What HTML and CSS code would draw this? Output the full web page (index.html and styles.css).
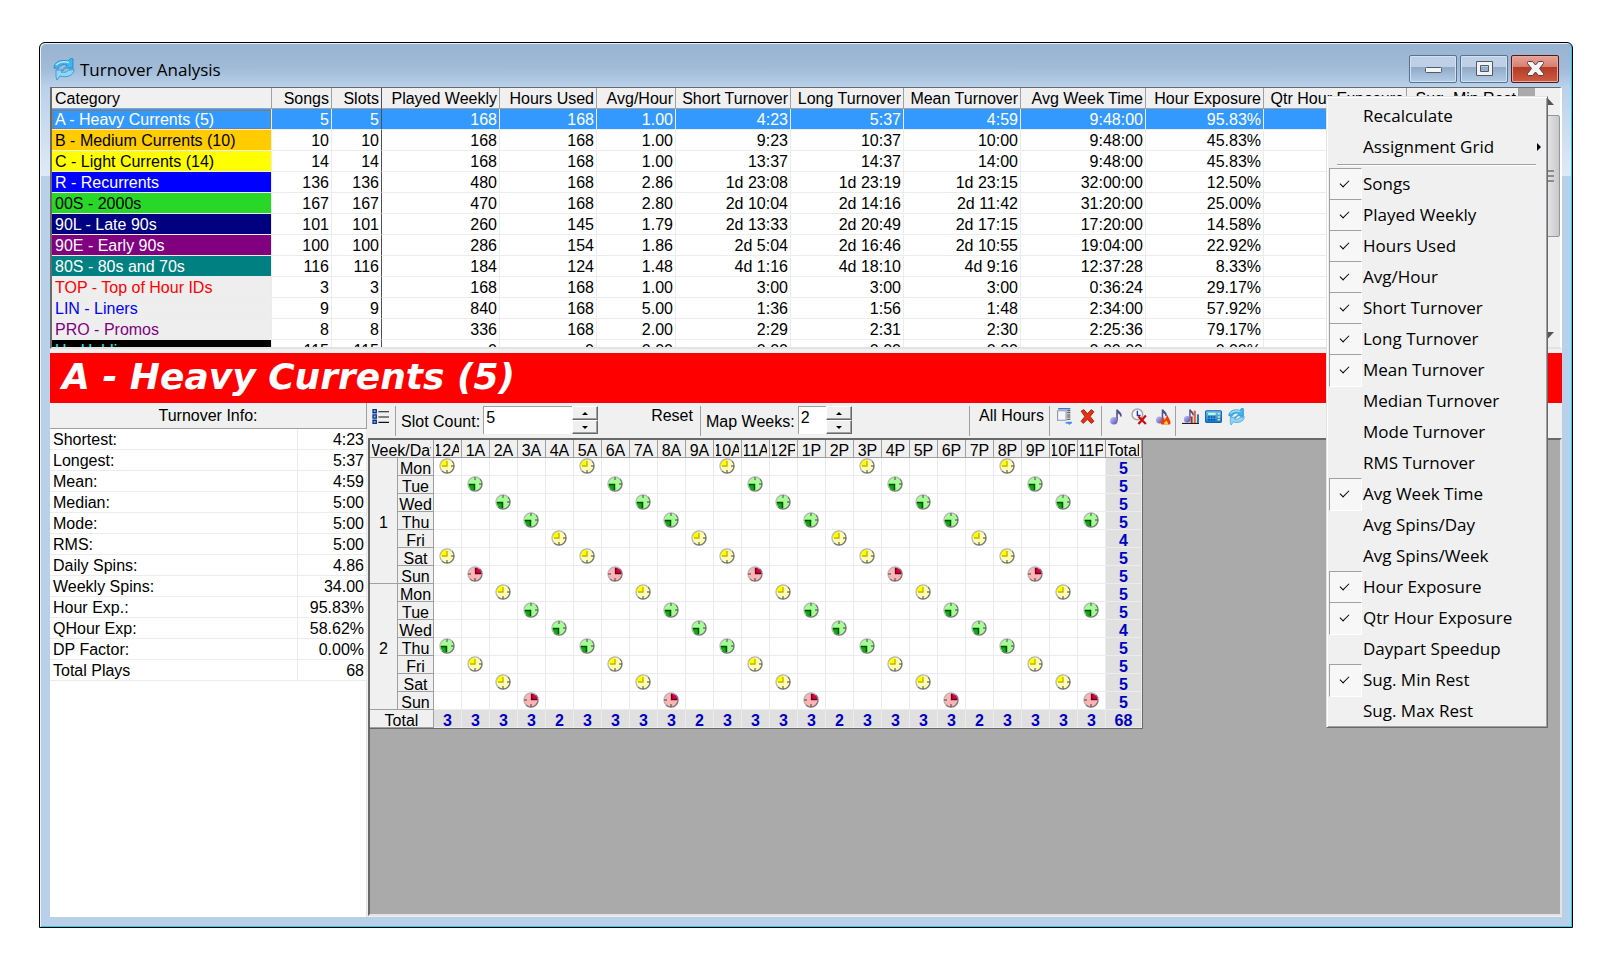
FILE: index.html
```html
<!DOCTYPE html>
<html lang="en">
<head>
<meta charset="utf-8">
<title>Turnover Analysis</title>
<link rel="stylesheet" href="styles.css">
</head>
<body>
<svg class="sprite" aria-hidden="true">
  <defs>
    <linearGradient id="orb" x1="0" y1="0" x2="1" y2="1"><stop offset="0" stop-color="#c9c9fa"/><stop offset="1" stop-color="#4b4bb4"/></linearGradient>
    <linearGradient id="sky" x1="0" y1="0" x2="0" y2="1"><stop offset="0" stop-color="#6cc9f7"/><stop offset="1" stop-color="#1579cf"/></linearGradient>
  </defs>
  <symbol id="clock-yellow" viewBox="0 0 16 16">
    <circle cx="8" cy="8" r="7" fill="#ffffb4"/>
    <path d="M8 8V1A7 7 0 0 0 1 8Z" fill="#ffff00"/><path d="M3 8h5V3" fill="none" stroke="#c8b400" stroke-width="1.4"/>
    <path d="M13 3A7 7 0 0 1 3 13" fill="none" stroke="#777" stroke-width="1.3"/><path d="M3 13A7 7 0 1 1 13 3" fill="none" stroke="#b4b4b4" stroke-width="1.2"/>
    <path d="M8 15v-3M15 8h-3" stroke="#444" stroke-width="1"/>
  </symbol>
  <symbol id="clock-green" viewBox="0 0 16 16">
    <circle cx="8" cy="8" r="7" fill="#a6ff96"/>
    <path d="M8 8H1a7 7 0 0 0 7 7Z" fill="#00b400"/><path d="M2 8.600h5.500V14" fill="none" stroke="#004600" stroke-width="1.500"/>
    <path d="M13 3A7 7 0 0 1 3 13" fill="none" stroke="#777" stroke-width="1.3"/><path d="M3 13A7 7 0 1 1 13 3" fill="none" stroke="#b4b4b4" stroke-width="1.2"/>
    <path d="M8 1v3M15 8h-3" stroke="#444" stroke-width="1"/>
  </symbol>
  <symbol id="clock-red" viewBox="0 0 16 16">
    <circle cx="8" cy="8" r="7" fill="#ffb4b4"/>
    <path d="M8 8V1a7 7 0 0 1 7 7Z" fill="#dc0046"/><path d="M8.600 2v5.500H14" fill="none" stroke="#64001e" stroke-width="1.500"/>
    <path d="M13 3A7 7 0 0 1 3 13" fill="none" stroke="#777" stroke-width="1.3"/><path d="M3 13A7 7 0 1 1 13 3" fill="none" stroke="#b4b4b4" stroke-width="1.2"/>
    <path d="M8 15v-3M1 8h3" stroke="#444" stroke-width="1"/>
  </symbol>
  <symbol id="refresh" viewBox="0 0 22 22">
    <path d="M1 10C1 4 8 1 15 3L18 0l2 1v9h-8l2-3C10 6 7 7 5 11Z" fill="#3fb4f2" stroke="#1e86c8" stroke-width=".8"/>
    <path d="M3 7C6 4 11 3 16 4.500" fill="none" stroke="#b6e6ff" stroke-width="1.500"/>
    <path d="M21 11c0 7-8 9-14 7l-3 4-1-3v-7h8l-3 2c4 1 7 0 9-4Z" fill="#8fd6fa" stroke="#2c8fcb" stroke-width=".8"/>
    <path d="M8 13l6-4M3 10l4-2M16 12l4-1" stroke="#4fa8d8" stroke-width="2"/>
  </symbol>
  <symbol id="note" viewBox="0 0 16 16">
    <path d="M8.500 12V1.500C9 4 13 4 12 8" fill="none" stroke="#50508c" stroke-width="1.500"/>
    <path d="M9 2c1 2 4 3 3 6-.5-2-2-2.500-3-3Z" fill="#50508c"/>
    <circle cx="5.500" cy="12" r="3.500" fill="url(#orb)"/>
  </symbol>
</svg>

<main class="window">
  <header class="titlebar">
    <svg class="app-icon"><use href="#refresh"/></svg>
    <h1 class="title">Turnover Analysis</h1>
    <div class="window-buttons">
      <button class="win-btn" aria-label="Minimize"><svg viewBox="0 0 46 26"><rect x="15.500" y="11.500" width="16" height="5" rx="1" fill="#f4f4f4" stroke="#50586a"/></svg></button>
      <button class="win-btn" aria-label="Maximize"><svg viewBox="0 0 46 26"><path d="M15.500 5.500h16v14h-16ZM19.500 9.500v6h8v-6Z" fill="#f2f2f2" fill-rule="evenodd" stroke="#50586a"/></svg></button>
      <button class="win-btn win-close" aria-label="Close"><svg viewBox="0 0 46 26"><path d="M15.500 6.500q0-1 1-1h4l3 3.500 3-3.500h4q1 0 1 1v1l-4 5 4 5v1q0 1-1 1h-4l-3-3.500-3 3.500h-4q-1 0-1-1v-1l4-5-4-5Z" fill="#f4f4f4" stroke="#57383c"/></svg></button>
    </div>
  </header>

  <div class="client">
    <section class="category-pane">
      <div class="category-scroll">
        <table class="categories">
          <colgroup><col class="w-cat"><col class="w-songs"><col class="w-slots"><col class="w-played"><col class="w-hours"><col class="w-avg"><col class="w-short"><col class="w-long"><col class="w-mean"><col class="w-week"><col class="w-hexp"><col class="w-qexp"><col class="w-rest"></colgroup>
          <thead><tr><th>Category</th><th>Songs</th><th>Slots</th><th>Played Weekly</th><th>Hours Used</th><th>Avg/Hour</th><th>Short Turnover</th><th>Long Turnover</th><th>Mean Turnover</th><th>Avg Week Time</th><th>Hour Exposure</th><th>Qtr Hour Exposure</th><th>Sug. Min Rest</th></tr></thead>
          <tbody>
            <tr class="selected"><td>A - Heavy Currents (5)</td><td>5</td><td>5</td><td>168</td><td>168</td><td>1.00</td><td>4:23</td><td>5:37</td><td>4:59</td><td>9:48:00</td><td>95.83%</td><td></td><td></td></tr>
            <tr><td class="c-orange">B - Medium Currents (10)</td><td>10</td><td>10</td><td>168</td><td>168</td><td>1.00</td><td>9:23</td><td>10:37</td><td>10:00</td><td>9:48:00</td><td>45.83%</td><td></td><td></td></tr>
            <tr><td class="c-yellow">C - Light Currents (14)</td><td>14</td><td>14</td><td>168</td><td>168</td><td>1.00</td><td>13:37</td><td>14:37</td><td>14:00</td><td>9:48:00</td><td>45.83%</td><td></td><td></td></tr>
            <tr><td class="c-blue">R - Recurrents</td><td>136</td><td>136</td><td>480</td><td>168</td><td>2.86</td><td>1d 23:08</td><td>1d 23:19</td><td>1d 23:15</td><td>32:00:00</td><td>12.50%</td><td></td><td></td></tr>
            <tr><td class="c-green">00S - 2000s</td><td>167</td><td>167</td><td>470</td><td>168</td><td>2.80</td><td>2d 10:04</td><td>2d 14:16</td><td>2d 11:42</td><td>31:20:00</td><td>25.00%</td><td></td><td></td></tr>
            <tr><td class="c-navy">90L - Late 90s</td><td>101</td><td>101</td><td>260</td><td>145</td><td>1.79</td><td>2d 13:33</td><td>2d 20:49</td><td>2d 17:15</td><td>17:20:00</td><td>14.58%</td><td></td><td></td></tr>
            <tr><td class="c-purple">90E - Early 90s</td><td>100</td><td>100</td><td>286</td><td>154</td><td>1.86</td><td>2d 5:04</td><td>2d 16:46</td><td>2d 10:55</td><td>19:04:00</td><td>22.92%</td><td></td><td></td></tr>
            <tr><td class="c-teal">80S - 80s and 70s</td><td>116</td><td>116</td><td>184</td><td>124</td><td>1.48</td><td>4d 1:16</td><td>4d 18:10</td><td>4d 9:16</td><td>12:37:28</td><td>8.33%</td><td></td><td></td></tr>
            <tr><td class="c-plain t-red">TOP - Top of Hour IDs</td><td>3</td><td>3</td><td>168</td><td>168</td><td>1.00</td><td>3:00</td><td>3:00</td><td>3:00</td><td>0:36:24</td><td>29.17%</td><td></td><td></td></tr>
            <tr><td class="c-plain t-blue">LIN - Liners</td><td>9</td><td>9</td><td>840</td><td>168</td><td>5.00</td><td>1:36</td><td>1:56</td><td>1:48</td><td>2:34:00</td><td>57.92%</td><td></td><td></td></tr>
            <tr><td class="c-plain t-purple">PRO - Promos</td><td>8</td><td>8</td><td>336</td><td>168</td><td>2.00</td><td>2:29</td><td>2:31</td><td>2:30</td><td>2:25:36</td><td>79.17%</td><td></td><td></td></tr>
            <tr><td class="c-black">H - Holding</td><td>115</td><td>115</td><td>0</td><td>0</td><td>0.00</td><td>0:00</td><td>0:00</td><td>0:00</td><td>0:00:00</td><td>0.00%</td><td></td><td></td></tr>
          </tbody>
        </table>
      </div>
      <div class="scrollbar" aria-hidden="true">
        <svg class="arrow" viewBox="0 0 13 7"><path d="M0 7 6.500 0 13 7Z" fill="#555"/></svg>
        <div class="thumb"><i></i><i></i><i></i></div>
        <svg class="arrow" viewBox="0 0 13 7"><path d="M0 0h13L6.500 7Z" fill="#555"/></svg>
      </div>
    </section>

    <h2 class="banner">A - Heavy Currents (5)</h2>

    <div class="lower">
      <aside class="info-pane">
        <table class="info">
          <colgroup><col class="i-name"><col class="i-value"></colgroup>
          <thead><tr><th colspan="2">Turnover Info:</th></tr></thead>
          <tbody>
            <tr><td>Shortest:</td><td>4:23</td></tr>
            <tr><td>Longest:</td><td>5:37</td></tr>
            <tr><td>Mean:</td><td>4:59</td></tr>
            <tr><td>Median:</td><td>5:00</td></tr>
            <tr><td>Mode:</td><td>5:00</td></tr>
            <tr><td>RMS:</td><td>5:00</td></tr>
            <tr><td>Daily Spins:</td><td>4.86</td></tr>
            <tr><td>Weekly Spins:</td><td>34.00</td></tr>
            <tr><td>Hour Exp.:</td><td>95.83%</td></tr>
            <tr><td>QHour Exp:</td><td>58.62%</td></tr>
            <tr><td>DP Factor:</td><td>0.00%</td></tr>
            <tr><td>Total Plays</td><td>68</td></tr>
          </tbody>
        </table>
      </aside>

      <section class="map-pane">
        <div class="toolbar">
          <div class="group g-list">
            <button class="tool" aria-label="List"><svg viewBox="0 0 16 16"><path d="M6 3.500h10M6 8.500h10M6 13.500h10" stroke="#111" stroke-width="1"/><path d="M1 1.500h3v3H1ZM1 6.500h3v3H1ZM1 11.500h3v3H1Z" fill="#7fd0a0" stroke="#0a2ca0" stroke-width="1.300"/></svg></button>
          </div>
          <div class="group g-slots">
            <label for="slots">Slot Count:</label>
            <input class="num num-wide" id="slots" type="text" value="5">
            <span class="spin"><button aria-label="More slots"><svg viewBox="0 0 6 3"><path d="M0 3 3 0l3 3Z"/></svg></button><button aria-label="Fewer slots"><svg viewBox="0 0 6 3"><path d="M0 0h6L3 3Z"/></svg></button></span>
            <button class="text-btn reset">Reset</button>
          </div>
          <div class="group g-weeks">
            <label for="weeks">Map Weeks:</label>
            <input class="num" id="weeks" type="text" value="2">
            <span class="spin"><button aria-label="More weeks"><svg viewBox="0 0 6 3"><path d="M0 3 3 0l3 3Z"/></svg></button><button aria-label="Fewer weeks"><svg viewBox="0 0 6 3"><path d="M0 0h6L3 3Z"/></svg></button></span>
          </div>
          <div class="group g-hours"><button class="text-btn">All Hours</button></div>
          <div class="group g-icons">
            <button class="tool" aria-label="Fit"><svg viewBox="0 0 16 16"><path d="M1.500 2.500h8v9h-8Z" fill="#f4f6fc" stroke="#8a94b4"/><path d="M2 .700h11.500M9 14h6" fill="none" stroke="#3c78c8" stroke-width="1.300"/><path d="M12 2v10" stroke="#333" stroke-width="3" stroke-dasharray="1 1"/><path d="M10 13h5l-2.500 3Z" fill="#3c8ce6"/></svg></button>
            <button class="tool" aria-label="Delete"><svg viewBox="0 0 16 16"><path d="M2 3 4.500 1.500 8 5.500 11.500 1.500 14 3.500 10.500 8 14 12.500 11.500 14.500 8 10.500 4 14.500 2 12.500 5.500 8Z" fill="#e83214" stroke="#a01400" stroke-width=".8"/></svg></button>
          </div>
          <div class="group g-icons g-three">
            <button class="tool" aria-label="Song"><svg><use href="#note"/></svg></button>
            <button class="tool" aria-label="Clear time"><svg viewBox="0 0 16 16"><circle cx="6" cy="6" r="5" fill="#f6f6ff" stroke="#a8a8a8" stroke-width="1.400"/><path d="M6 2.500V7h3" fill="none" stroke="#323296" stroke-width="1.300"/><path d="m7 8 7 7M14 7l-7 8" stroke="#c80a0a" stroke-width="2"/></svg></button>
            <button class="tool" aria-label="Burn"><svg viewBox="0 0 16 16"><use href="#note" width="15" height="15"/><path d="M7 15.500c-2-3 1-4 1-7 2 1 2 2 2 3 1-2 1-3 3-5 0 3 4 6 2 9Z" fill="#f03c0a"/><path d="M10 15.500c-1-2 1-3 2-4 0 2 2 2 1 4Z" fill="#ffd23c"/></svg></button>
          </div>
          <div class="group g-icons g-last">
            <button class="tool" aria-label="Song chart"><svg viewBox="0 0 16 16"><use href="#note" width="14" height="14"/><path d="M9 14V8" stroke="#903c1e" stroke-width="2"/><path d="M12 14V2.500" stroke="#e6643c" stroke-width="2"/><path d="M15 14V6" stroke="#2878b4" stroke-width="2"/><path d="M0 14.500h16" stroke="#111" stroke-width="1"/></svg></button>
            <button class="tool" aria-label="Calculator"><svg viewBox="0 0 16 16"><rect x=".5" y="2.500" width="15" height="11" rx="1" fill="url(#sky)" stroke="#1464b4"/><path d="M3 5.500h7" stroke="#d2fac8" stroke-width="2"/><path d="M3 8.500h7M3 11h7" stroke="#0f468c" stroke-width="1.400" stroke-dasharray="1.500 1"/><path d="M12 5.500h2M12 8.500h2M12 11h2" stroke="#ffe07a" stroke-width="1.400"/></svg></button>
            <button class="tool" aria-label="Refresh"><svg><use href="#refresh"/></svg></button>
          </div>
        </div>
        <div class="map-area">
          <table class="map" id="map"></table>
        </div>
      </section>
    </div>
  </div>

  <div class="menu" role="menu">
    <button role="menuitem">Recalculate</button>
    <button role="menuitem" class="has-sub">Assignment Grid<svg viewBox="0 0 4 8"><path d="M0 0l4 4-4 4Z"/></svg></button>
    <hr>
    <button role="menuitemcheckbox" aria-checked="true">Songs</button>
    <button role="menuitemcheckbox" aria-checked="true">Played Weekly</button>
    <button role="menuitemcheckbox" aria-checked="true">Hours Used</button>
    <button role="menuitemcheckbox" aria-checked="true">Avg/Hour</button>
    <button role="menuitemcheckbox" aria-checked="true">Short Turnover</button>
    <button role="menuitemcheckbox" aria-checked="true">Long Turnover</button>
    <button role="menuitemcheckbox" aria-checked="true">Mean Turnover</button>
    <button role="menuitemcheckbox" aria-checked="false">Median Turnover</button>
    <button role="menuitemcheckbox" aria-checked="false">Mode Turnover</button>
    <button role="menuitemcheckbox" aria-checked="false">RMS Turnover</button>
    <button role="menuitemcheckbox" aria-checked="true">Avg Week Time</button>
    <button role="menuitemcheckbox" aria-checked="false">Avg Spins/Day</button>
    <button role="menuitemcheckbox" aria-checked="false">Avg Spins/Week</button>
    <button role="menuitemcheckbox" aria-checked="true">Hour Exposure</button>
    <button role="menuitemcheckbox" aria-checked="true">Qtr Hour Exposure</button>
    <button role="menuitemcheckbox" aria-checked="false">Daypart Speedup</button>
    <button role="menuitemcheckbox" aria-checked="true">Sug. Min Rest</button>
    <button role="menuitemcheckbox" aria-checked="false">Sug. Max Rest</button>
  </div>
</main>
<script src="map.js"></script>
</body>
</html>
```
FILE: map.js
```js
// Play map: a clock marks each hour in which the category is played.
const hours = ["A", "P"].flatMap(h => [12, 1, 2, 3, 4, 5, 6, 7, 8, 9, 10, 11].map(n => n + h));
const days = ["Mon", "Tue", "Wed", "Thu", "Fri", "Sat", "Sun"];
// [first hour played, clock colour] for each day; plays repeat every five hours
const weeks = [
  [[0, "yellow"], [1, "green"], [2, "green"], [3, "green"], [4, "yellow"], [0, "yellow"], [1, "red"]],
  [[2, "yellow"], [3, "green"], [4, "green"], [0, "green"], [1, "yellow"], [2, "yellow"], [3, "red"]]
];
const step = 5;
const totals = hours.map(() => 0);

const cell = (tag, text, attrs = "") => `<${tag} ${attrs}><span>${text}</span></${tag}>`;
const clock = colour => `<svg class="clock"><use href="#clock-${colour}"/></svg>`;

let html = `<colgroup><col class="m-week"><col class="m-day"><col class="m-hour" span="24"><col class="m-total"></colgroup>`;
html += "<thead><tr>" + cell("th", "Week/Day", 'colspan="2"') + hours.map(h => cell("th", h)).join("") + cell("th", "Total") + "</tr></thead><tbody>";
weeks.forEach((week, w) => {
  week.forEach(([first, colour], d) => {
    let count = 0;
    html += "<tr>";
    if (d === 0) html += cell("th", w + 1, 'rowspan="7" class="week"');
    html += cell("th", days[d], 'class="day"');
    hours.forEach((_, h) => {
      const played = h % step === first;
      if (played) { count++; totals[h]++; }
      html += `<td>${played ? clock(colour) : ""}</td>`;
    });
    html += cell("td", count, 'class="sum"') + "</tr>";
  });
});
html += "<tr>" + cell("th", "Total", 'colspan="2"') + totals.map(t => cell("td", t, 'class="sum"')).join("") +
  cell("td", totals.reduce((a, b) => a + b), 'class="sum"') + "</tr></tbody>";
document.getElementById("map").innerHTML = html;
```
FILE: styles.css
```css
* { box-sizing: border-box; }
body {
  margin: 0;
  min-height: 100vh;
  padding: 42px 49px 42px 39px;
  display: flex;
  background: #fff;
  color: #000;
  font: 16px/20px "Liberation Sans", Arial, sans-serif;
}
button, input { font: inherit; color: inherit; }
button { background: none; border: 0; padding: 0; margin: 0; }
table { border-collapse: separate; border-spacing: 0; table-layout: fixed; }
th { font-weight: normal; }
td, th { padding: 0; white-space: nowrap; overflow: hidden; }
svg { display: block; }
.sprite { position: absolute; width: 0; height: 0; }

/* window frame */
.window {
  position: relative;
  flex: 1;
  min-width: 0;
  display: flex;
  flex-direction: column;
  padding: 0 10px 10px;
  border: 1px solid #000;
  border-radius: 6px 6px 0 0;
  box-shadow: inset 1px 1px 0 #e8f2fb, inset -1px -1px 0 #2bcbe6;
  background: linear-gradient(#98b3d1 0, #a0bad7 25px, #b9d1ea 44px, #e0eaf6 133px, #b9d0ea 133px);
}
.titlebar { display: flex; align-items: center; height: 44px; padding: 0 3px 0 3px; }
.app-icon { width: 22px; height: 22px; margin-top: 8px; }
.title { flex: 1; margin: 10px 0 0 5px; font: 17px/24px "Open Sans", "Noto Sans", sans-serif; }
.window-buttons { display: flex; gap: 3px; margin-top: 8px; }
.win-btn {
  width: 48px;
  height: 28px;
  border: 1px solid #5a7290;
  border-radius: 2px;
  box-shadow: inset 0 0 0 1px #d3e2f2;
  background: linear-gradient(#bdd0e6 0 42%, #8fa9c6 42%, #b4cde6);
}
.win-close {
  border-color: #50191e;
  box-shadow: inset 0 0 0 1px #e8a89c;
  background: linear-gradient(#e6a498 0, #d6806f 42%, #b23a26 42%, #cf5c42);
}
.client { flex: 1; min-height: 0; display: flex; flex-direction: column; background: #f0f0f0; }

/* category list */
.category-pane {
  display: flex;
  height: 262px;
  border-top: 1px solid #696969;
  border-left: 2px solid #696969;
  border-right: 2px solid #fff;
  border-bottom: 2px solid #e3e3e3;
}
.category-scroll { flex: 1; min-width: 0; overflow: hidden; background: #aaa; }
.categories { width: 1467px; background: #fff; }
.w-cat { width: 220px; } .w-songs { width: 60px; } .w-slots { width: 50px; }
.w-played { width: 118px; } .w-hours { width: 97px; } .w-avg { width: 79px; }
.w-short { width: 115px; } .w-long { width: 113px; } .w-mean { width: 117px; }
.w-week { width: 125px; } .w-hexp { width: 118px; } .w-qexp { width: 143px; } .w-rest { width: 112px; }
.categories th, .categories td {
  height: 21px;
  padding: 1px 2px 0 0;
  line-height: 19px;
  text-align: right;
  border-right: 1px solid #ececec;
  border-bottom: 1px solid #ececec;
}
.categories th { background: #f0f0f0; border-color: #a0a0a0; }
.categories th:first-child, .categories td:first-child { padding-left: 3px; text-align: left; }
.categories th:nth-child(3), .categories td:nth-child(3) { border-right-color: #505050; }
.selected td { background: #3399ff; color: #fff; }
.categories .selected td:first-child { outline: 1px dotted #c86400; outline-offset: -2px; }
.c-orange { background: #ffcc00; } .c-yellow { background: #ffff00; }
.c-blue { background: #0000ff; color: #fff; } .c-green { background: #28d728; }
.c-navy { background: #000080; color: #fff; } .c-purple { background: #800080; color: #fff; }
.c-teal { background: #008080; color: #fff; } .c-plain { background: #eee; }
.c-black { background: #000; color: #00ffff; }
.t-red { color: #f00; } .t-blue { color: #00f; } .t-purple { color: #800080; }
.scrollbar {
  width: 25px;
  display: flex;
  flex-direction: column;
  align-items: center;
  padding: 10px 0 8px;
  background: #f0f0f0;
}
.arrow { width: 13px; height: 7px; }
.thumb {
  width: 25px;
  height: 122px;
  margin: 10px 0 auto;
  display: flex;
  flex-direction: column;
  align-items: center;
  justify-content: center;
  gap: 3px;
  border: 1px solid #979797;
  border-radius: 2px;
  background: linear-gradient(90deg, #f4f4f4, #e4e4e6 50%, #c8c8cc);
}
.thumb i { width: 12px; height: 2px; background: #8c8c8c; }

.banner {
  margin: 4px 0 0;
  height: 50px;
  padding-left: 12px;
  background: #f00;
  color: #fff;
  font: italic bold 36px/48px "DejaVu Sans", Verdana, sans-serif;
}

/* turnover figures */
.lower { flex: 1; min-height: 0; display: flex; }
.info-pane { width: 317px; background: #fff; border-right: 1px solid #e3e3e3; }
.info { width: 317px; }
.i-name { width: 248px; }
.i-value { width: 69px; }
.info th { height: 26px; padding-top: 1px; background: #f0f0f0; border-right: 1px solid #a0a0a0; border-bottom: 1px solid #a0a0a0; }
.info td { height: 21px; padding: 1px 2px 0 3px; line-height: 19px; border-bottom: 1px solid #ececec; border-right: 1px solid #ececec; }
.info td:last-child { text-align: right; }

/* toolbar */
.map-pane { flex: 1; min-width: 0; display: flex; flex-direction: column; padding: 0 0 1px 1px; }
.toolbar { display: flex; height: 35px; padding: 3px 0 2px; }
.group { display: flex; align-items: flex-start; }
.group + .group { border-left: 1px solid #a0a0a0; }
.g-list { width: 27px; padding-left: 4px; }
.g-slots { width: 305px; padding-left: 5px; }
.g-weeks { width: 269px; padding-left: 5px; }
.g-hours { width: 80px; padding-left: 9px; }
.g-icons { width: 52px; padding-left: 6px; gap: 6px; }
.g-three { width: 74px; }
.g-last { width: auto; }
.tool { width: 17px; height: 17px; margin-top: 2px; }
.tool svg { width: 17px; height: 17px; }
.toolbar label { margin: 6px 3px 0 0; }
.num {
  width: 28px;
  height: 28px;
  padding: 0 0 6px 2px;
  border: 1px solid #a0a0a0;
  border-right: 0;
  border-bottom: 0;
  border-radius: 0;
  background: #fff;
}
.num-wide { width: 89px; }
.spin { display: flex; flex-direction: column; width: 26px; }
.spin button {
  display: grid;
  place-items: center;
  height: 14px;
  background: #f0f0f0;
  border: 1px solid;
  border-color: #fff #696969 #696969 #fff;
  box-shadow: inset -1px -1px 0 #a0a0a0;
}
.spin svg { width: 6px; height: 3px; }
.reset { margin-left: 53px; }

/* play map */
.map-area { flex: 1; min-height: 0; overflow: hidden; background: #aaa; border: 2px solid #696969; border-right-color: #e3e3e3; border-bottom-color: #e3e3e3; }
.map { width: 773px; background: #fff; border-right: 1px solid #696969; border-bottom: 1px solid #696969; }
.m-week { width: 28px; } .m-day { width: 36px; } .m-hour { width: 28px; } .m-total { width: 36px; }
.map th, .map td { height: 18px; border-right: 1px solid #ececec; border-bottom: 1px solid #ececec; line-height: 17px; vertical-align: top; }
.map th { background: #f0f0f0; border-color: #a0a0a0; }
.map span { display: flex; justify-content: center; height: 17px; margin: 0 2px; padding-top: 2px; overflow: hidden; }
.map .day span, .map .sum span { margin: 0; }
.map .week { vertical-align: middle; }
.map .sum { background: #e0e0e0; color: #0000c0; font-weight: bold; }
.clock { width: 16px; height: 16px; margin: 0 0 0 5px; }

/* column menu */
.menu {
  position: absolute;
  top: 53px;
  right: 24px;
  width: 222px;
  padding: 3px 1px 1px;
  display: flex;
  flex-direction: column;
  background: #f0f0f0;
  border: 1px solid;
  border-color: #e3e3e3 #696969 #696969 #e3e3e3;
  box-shadow: inset 1px 1px 0 #fff, inset -1px -1px 0 #a0a0a0;
  font: 17px/31px "Open Sans", "Noto Sans", sans-serif;
}
.menu button { position: relative; height: 31px; padding: 0 0 0 35px; display: flex; align-items: center; justify-content: space-between; text-align: left; }
.menu hr { width: 199px; height: 2px; margin: 2px 0 2px 9px; border: 0; border-top: 1px solid #a0a0a0; background: #fff; }
.menu [aria-checked="true"]::before {
  content: "";
  position: absolute;
  left: 1px;
  top: 0;
  width: 31px;
  height: 31px;
  border: 1px solid;
  border-color: #a0a0a0 #fff #fff #a0a0a0;
  background: #f7f7f7;
}
.menu [aria-checked="true"]::after {
  content: "";
  position: absolute;
  left: 12px;
  top: 12px;
  width: 8px;
  height: 4px;
  border: solid #000;
  border-width: 0 0 1px 1px;
  transform: rotate(-45deg);
}
.has-sub svg { width: 4px; height: 8px; margin-right: 5px; }
```
